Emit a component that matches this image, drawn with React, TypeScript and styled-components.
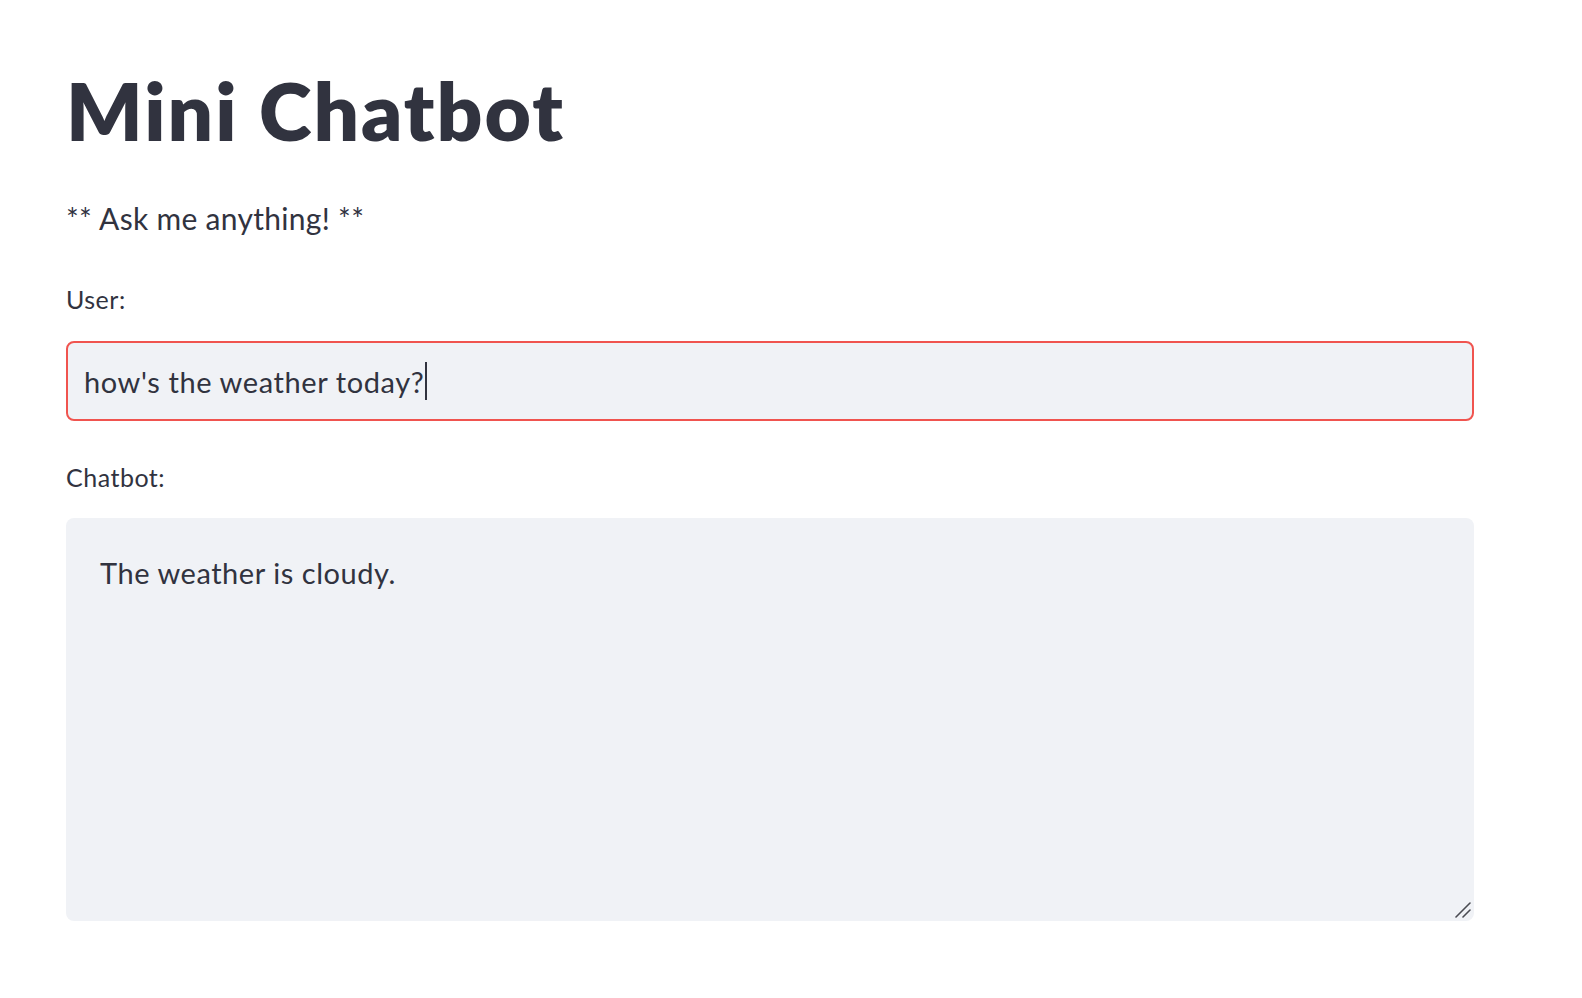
import styled, { createGlobalStyle } from "styled-components";

const GlobalStyle = createGlobalStyle`
  html, body {
    margin: 0;
    padding: 0;
    background: #ffffff;
  }
  body {
    font-family: "Lato", "Noto Sans", sans-serif;
    color: #31333f;
  }
`;

const App = () => {
  return (
    <>
      <GlobalStyle />
      <Main>
        <Title>Mini Chatbot</Title>
        <Intro>** Ask me anything! **</Intro>
        <Field $top={45}>
          <Label>User:</Label>
          <InputBox>
            how's the weather today?
            <Caret />
          </InputBox>
        </Field>
        <Field $top={40}>
          <Label>Chatbot:</Label>
          <AreaWrap>
            <TextArea readOnly defaultValue="The weather is cloudy." />
            <Grip viewBox="0 0 16 16" aria-hidden="true">
              <line x1="1" y1="15" x2="15" y2="1" />
              <line x1="8" y1="15" x2="15" y2="8" />
            </Grip>
          </AreaWrap>
        </Field>
      </Main>
    </>
  );
};

export default App;

const Main = styled.main`
  width: 1408px;
  padding: 60px 0 0 66px;
  display: flex;
  flex-direction: column;
`;

const Title = styled.h1`
  margin: 0;
  font-size: 80px;
  font-weight: 800;
  line-height: 100px;
  letter-spacing: 2px;
  color: #31333f;
`;

const Intro = styled.p`
  margin: 38px 0 0;
  font-size: 30px;
  line-height: 40px;
  letter-spacing: 0.3px;
`;

const Field = styled.div<{ $top: number }>`
  display: flex;
  flex-direction: column;
  margin-top: ${(p) => p.$top}px;
`;

const Label = styled.label`
  font-size: 25px;
  line-height: 32px;
  letter-spacing: 0.5px;
  margin-bottom: 20px;
`;

const InputBox = styled.div`
  box-sizing: border-box;
  height: 80px;
  margin-top: 6px;
  display: flex;
  align-items: center;
  padding: 0 16px;
  background: #f0f2f6;
  border: 2px solid #f0544f;
  border-radius: 8px;
  font-size: 29px;
  letter-spacing: 0.6px;
  color: #31333f;
  white-space: pre;
`;

const Caret = styled.span`
  display: inline-block;
  width: 2px;
  height: 38px;
  margin-left: 1px;
  background: #31333f;
`;

const AreaWrap = styled.div`
  position: relative;
  display: flex;
  margin-top: 5px;
`;

const TextArea = styled.textarea`
  box-sizing: border-box;
  height: 403px;
  width: 100%;
  padding: 35px 34px;
  background: #f0f2f6;
  border: none;
  border-radius: 8px;
  outline: none;
  resize: none;
  font-family: "Lato", "Noto Sans", sans-serif;
  font-size: 29px;
  line-height: 40px;
  letter-spacing: 0.55px;
  color: #31333f;
`;

const Grip = styled.svg`
  position: absolute;
  right: 3px;
  bottom: 3px;
  width: 16px;
  height: 16px;
  stroke: #4a4b52;
  stroke-width: 1.6;
  stroke-linecap: round;
`;
